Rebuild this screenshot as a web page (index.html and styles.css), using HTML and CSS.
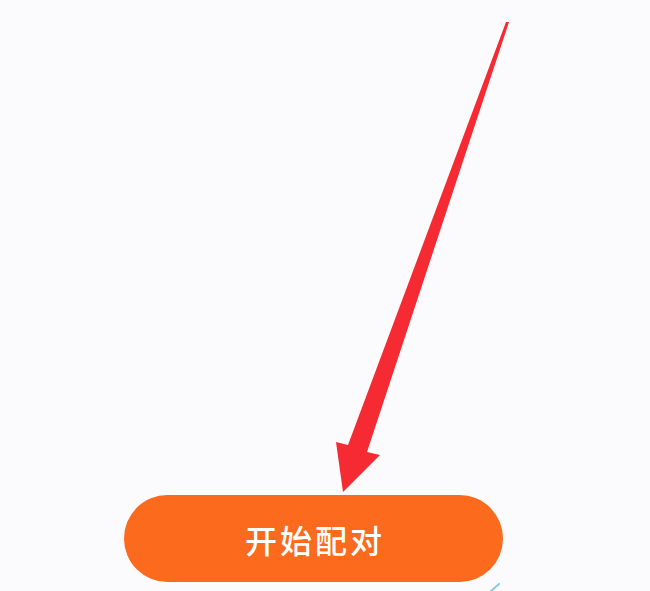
FILE: index.html
```html
<!DOCTYPE html>
<html lang="zh-CN">
<head>
<meta charset="utf-8">
<link rel="stylesheet" href="styles.css">
</head>
<body>
<div class="screen">
  <div class="footer">
    <button class="pair-btn">开始配对</button>
  </div>
  <svg class="overlay" width="650" height="591" viewBox="0 0 650 591">
    <polygon class="arrow" points="506,22 509,22 367,452 380,455 343,492 336,442 348,445"/>
    <line class="blue-mark" x1="491" y1="591" x2="499" y2="584"/>
  </svg>
</div>
</body>
</html>
```
FILE: styles.css
```css
html, body {
  margin: 0;
  padding: 0;
  background: #fbfafc;
}
.screen {
  position: relative;
  width: 650px;
  height: 591px;
  overflow: hidden;
  display: flex;
  flex-direction: column;
  justify-content: flex-end;
  font-family: "Noto Sans CJK SC", "Noto Sans", sans-serif;
}
.footer {
  display: flex;
  padding: 0 0 9px 124px;
}
.pair-btn {
  width: 379px;
  height: 87px;
  border: none;
  border-radius: 44px;
  background: #fc6a1e;
  color: #fff;
  font-family: "Noto Sans CJK SC", "Noto Sans", sans-serif;
  font-size: 32px;
  font-weight: 500;
  letter-spacing: 3px;
  padding: 0 0 0 3px;
  display: flex;
  align-items: center;
  justify-content: center;
}
.overlay {
  position: absolute;
  left: 0;
  top: 0;
  pointer-events: none;
}
.arrow {
  fill: #f52a32;
}
.blue-mark {
  stroke: #8cc8e8;
  stroke-width: 2;
  stroke-linecap: round;
}
```
